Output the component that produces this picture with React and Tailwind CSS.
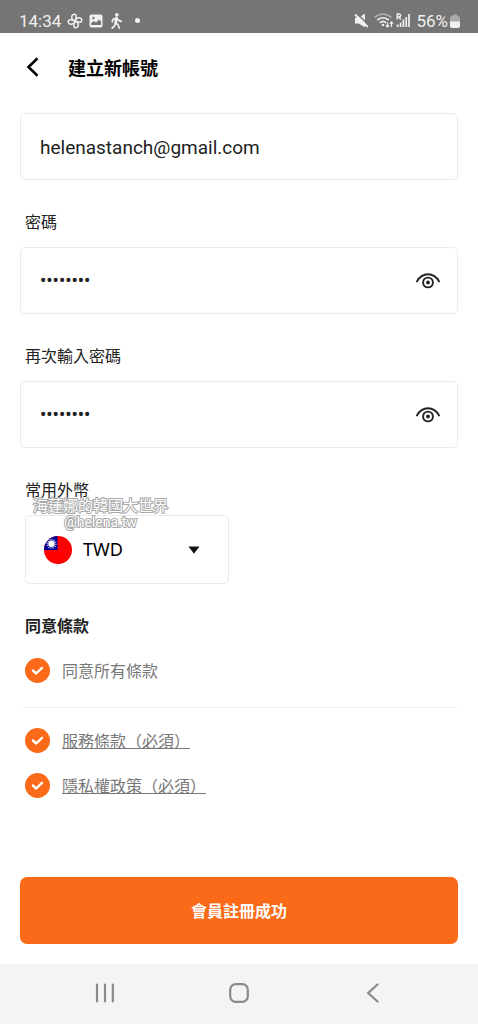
import { useState } from 'react'

const TERMS = [
  { id: 'service', label: '服務條款（必須）' },
  { id: 'privacy', label: '隱私權政策（必須）' },
]

function StatusBar() {
  return (
    <div className="flex h-[33px] shrink-0 items-center justify-between bg-[#757575] pt-2 pr-[18px] pl-[19px] text-[17px] leading-6 text-[#f1f1f1]">
      <div className="flex items-center">
        <span>14:34</span>
        {/* Fan */}
        <svg className="ml-[6px] size-[16px]" viewBox="0 0 16 16" fill="none" stroke="currentColor" strokeWidth="1.5" strokeLinejoin="round">
          <path d="M8 8C5.600 7.600 4.600 5.800 4.800 3.600 5 1.800 6.600 1 8.200 1.400 9.800 1.800 9.400 4.600 8 8Z" />
          <path d="M8 8c.4-2.400 2.200-3.400 4.400-3.200 1.800.2 2.600 1.800 2.200 3.400C14.200 9.800 11.400 9.400 8 8Z" />
          <path d="M8 8c2.400.4 3.400 2.200 3.200 4.400-.2 1.800-1.800 2.600-3.400 2.200C6.200 14.200 6.600 11.400 8 8Z" />
          <path d="M8 8c-.4 2.400-2.200 3.400-4.400 3.200C1.800 11 1 9.400 1.400 7.800 1.800 6.200 4.600 6.600 8 8Z" />
        </svg>
        {/* Picture */}
        <svg className="ml-[6px] size-[14px]" viewBox="0 0 14 14">
          <rect x="0.500" y="0.500" width="13" height="13" rx="2" fill="currentColor" />
          <path d="M2.200 11V9L5 7l2 1.800 3-3.300 2 2V11Z" fill="#757575" />
          <circle cx="4.500" cy="4" r="1.200" fill="#757575" />
        </svg>
        {/* Walking person */}
        <svg className="ml-[7px] h-[16px] w-[13px]" viewBox="0 0 13 16" fill="none" stroke="currentColor" strokeWidth="1.700" strokeLinecap="round" strokeLinejoin="round">
          <circle cx="6.800" cy="1.900" r="1.800" fill="currentColor" stroke="none" />
          <path d="M6.300 5.400 5.700 9.800" strokeWidth="2.800" />
          <path d="M6 4.900 2.900 6.400 2.200 8.800M7 5.200l1.700 2.200 2.500 1M5.400 10.200 4.500 12.800l-2.300 2.400M6 10l2.200 2.200 1.200 3" />
        </svg>
        <span className="ml-[12px] size-[5px] rounded-full bg-current" />
      </div>
      <div className="flex items-center">
        {/* Muted speaker */}
        <svg className="size-[15px]" viewBox="0 0 15 15">
          <path d="M1 4.500h3.500L11 .8v13.400L4.500 10.500H1Z" fill="currentColor" />
          <path d="M2.800.4 15 12.400" stroke="#757575" strokeWidth="1.500" />
          <path d="M1.200 1.500 13.800 14" stroke="currentColor" strokeWidth="1.900" />
        </svg>
        {/* Wi-Fi */}
        <svg className="ml-[5px] h-[15px] w-[20px]" viewBox="0 0 20 15" fill="none" stroke="currentColor" strokeWidth="1.700">
          <path d="M.7 4.600C5.500-.1 12.500-.1 17.300 4.600" opacity="0.450" />
          <path d="M3.200 7.200c3.500-3.200 8-3.200 11.600 0M5.800 9.800c2-1.800 4.400-1.800 6.400 0" />
          <circle cx="9" cy="12" r="1.300" fill="currentColor" stroke="none" />
          <path d="M13.500 9.500v4.500M11.800 12.300l1.700 1.700 1.700-1.700M17.500 14V9M15.900 10.700l1.600-1.700 1.600 1.700" strokeWidth="1.200" />
        </svg>
        {/* Roaming signal */}
        <svg className="ml-[2px] h-[15px] w-[14px]" viewBox="0 0 14 15" fill="none" stroke="currentColor">
          <path d="M1.200 6.500V1h1.900a1.500 1.500 0 0 1 0 3H1.200M3 4l1.700 2.500" strokeWidth="1.400" />
          <path d="M1.700 11.500V14M4.600 9.500V14M7.400 6.500V14M10.200 4V14M13 1V14" strokeWidth="1.700" />
        </svg>
        <span className="ml-[6px]">56%</span>
        {/* Battery */}
        <svg className="ml-[2px] h-[14px] w-[10px]" viewBox="0 0 10 14">
          <path d="M0 4a2 2 0 0 1 2-2L3.500.5h3L8 2a2 2 0 0 1 2 2v4H0Z" fill="#a9a9a9" />
          <path d="M0 7.500h10V12a2 2 0 0 1-2 2H2a2 2 0 0 1-2-2Z" fill="currentColor" />
        </svg>
      </div>
    </div>
  )
}

function EyeIcon() {
  return (
    <svg className="size-6" viewBox="0 0 24 24" fill="none" stroke="currentColor" strokeWidth="1.900" strokeLinecap="round">
      <path d="M1 12.400C6.200 2.900 17.800 2.900 23 12.400" />
      <circle cx="12" cy="13.500" r="4.900" />
      <circle cx="12" cy="13.500" r="1.900" fill="currentColor" stroke="none" />
    </svg>
  )
}

function PasswordField({ id, label }) {
  const [visible, setVisible] = useState(false)

  return (
    <div>
      <label htmlFor={id} className="block pt-[31px] pb-3 pl-[5px] leading-6">{label}</label>
      <div className="flex h-[67px] items-center rounded-[5px] border border-[#ebebeb] pr-[17px] pl-[19px]">
        <input
          id={id}
          type={visible ? 'text' : 'password'}
          defaultValue="••••••••"
          className="min-w-0 flex-1 bg-transparent text-[18px] leading-6 font-medium outline-none"
        />
        <button type="button" aria-label={label} onClick={() => setVisible(!visible)}>
          <EyeIcon />
        </button>
      </div>
    </div>
  )
}

function RoundCheck({ id, checked, onChange }) {
  return (
    <span className="grid shrink-0 place-items-center">
      <input
        id={id}
        type="checkbox"
        checked={checked}
        onChange={onChange}
        className="col-start-1 row-start-1 size-[25px] appearance-none rounded-full bg-gray-300 checked:bg-[#fb6a18]"
      />
      <svg className="pointer-events-none col-start-1 row-start-1 size-[25px]" viewBox="0 0 25 25" fill="none" stroke="white" strokeWidth="2.400" strokeLinecap="round" strokeLinejoin="round">
        <path d="M8 12.500 11.200 15.500 17 9.800" />
      </svg>
    </span>
  )
}

function FlagTW() {
  return (
    <svg className="size-7 shrink-0" viewBox="0 0 28 28">
      <clipPath id="flag-round"><circle cx="14" cy="14" r="14" /></clipPath>
      <g clipPath="url(#flag-round)">
        <rect width="28" height="28" fill="#fe0000" />
        <rect width="13.500" height="14" fill="#000095" />
        <circle cx="7.500" cy="7.800" r="4.300" fill="none" stroke="#fff" strokeWidth="1.800" strokeDasharray="1.100 1.100" opacity="0.700" />
        <circle cx="7.500" cy="7.800" r="3.200" fill="#fff" />
      </g>
    </svg>
  )
}

export default function App() {
  const [agreed, setAgreed] = useState({ service: true, privacy: true })
  const all = agreed.service && agreed.privacy

  return (
    <div className="flex min-h-screen flex-col bg-white font-[Roboto,'Noto_Sans_CJK_TC',sans-serif] text-base text-[#222]">
      <StatusBar />

      <header className="flex h-[68px] shrink-0 items-center pl-[26px] text-black">
        <button type="button" aria-label="返回">
          <svg className="h-5 w-[14px]" viewBox="0 0 14 20" fill="none" stroke="currentColor" strokeWidth="2.600">
            <path d="M11.500 1.200 2.500 10l9 8.800" />
          </svg>
        </button>
        <h1 className="ml-[28px] pt-[3px] text-[18px] leading-6 font-bold">建立新帳號</h1>
      </header>

      <form className="flex flex-1 flex-col px-5 pt-3 pb-5" onSubmit={e => e.preventDefault()}>
        <input
          type="email"
          aria-label="Email"
          defaultValue="helenastanch@gmail.com"
          className="h-[67px] w-full rounded-[5px] border border-[#ebebeb] px-[19px] pt-[2px] text-[19px] outline-none"
        />
        <PasswordField id="password" label="密碼" />
        <PasswordField id="password-again" label="再次輸入密碼" />

        {/* Currency */}
        <div className="relative pl-[5px]">
          <label htmlFor="currency" className="block pt-[31px] pb-3 leading-6">常用外幣</label>
          <div className="flex h-[69px] w-[204px] items-center rounded-[5px] border border-[#ebebeb] pr-[28px] pl-[18px]">
            <FlagTW />
            <select id="currency" className="ml-[11px] min-w-0 flex-1 appearance-none bg-transparent font-['Noto_Sans',sans-serif] text-[18px] text-black outline-none">
              <option>TWD</option>
            </select>
            <svg className="pointer-events-none h-2 w-3" viewBox="0 0 12 8"><path d="M.5.500h11L6 7.800Z" fill="#111" /></svg>
          </div>
          <p className="pointer-events-none absolute top-[50px] left-[13px] text-center text-[15px] leading-4 text-white [-webkit-text-stroke:2px_#a8a8a8] [paint-order:stroke_fill]">
            海蓮娜的韓國大世界<br />
            <span className="text-[14px]">@helena.tw</span>
          </p>
        </div>

        {/* Terms */}
        <h2 className="pt-[31px] pl-[5px] leading-6 font-bold">同意條款</h2>
        <div className="mt-[17px] flex items-center gap-3 border-b border-[#f3f3f3] pb-[23px] pl-[5px] text-[#777]">
          <RoundCheck
            id="agree-all"
            checked={all}
            onChange={() => setAgreed({ service: !all, privacy: !all })}
          />
          <label htmlFor="agree-all" className="pt-1 leading-6">同意所有條款</label>
        </div>
        <div className="mt-[18px] space-y-[17px] pl-[5px] text-[#777]">
          {TERMS.map(t => (
            <div key={t.id} className="flex items-center gap-3">
              <RoundCheck
                id={t.id}
                checked={agreed[t.id]}
                onChange={() => setAgreed({ ...agreed, [t.id]: !agreed[t.id] })}
              />
              <label htmlFor={t.id} className="pt-1 leading-6"><a href="#" className="underline">{t.label}</a></label>
            </div>
          ))}
        </div>

        <button type="submit" className="mt-auto h-[67px] w-full shrink-0 rounded-[7px] bg-[#fb6a18] pt-[2px] font-bold text-white">
          會員註冊成功
        </button>
      </form>

      {/* System navigation */}
      <nav className="grid h-[60px] shrink-0 grid-cols-3 place-items-center bg-[#f4f4f4] px-[38px] pb-[2px] text-[#8a8a8a]">
        <button type="button" aria-label="Recents">
          <svg className="size-5" viewBox="0 0 20 20" stroke="currentColor" strokeWidth="2.200" strokeLinecap="round">
            <path d="M2 1.500v17M10 1.500v17M17.800 1.500v17" />
          </svg>
        </button>
        <button type="button" aria-label="Home">
          <svg className="size-5" viewBox="0 0 20 20" fill="none" stroke="currentColor" strokeWidth="2.200">
            <rect x="1.200" y="1.200" width="17.600" height="17.600" rx="5.500" />
          </svg>
        </button>
        <button type="button" aria-label="Back">
          <svg className="size-5" viewBox="0 0 20 20" fill="none" stroke="currentColor" strokeWidth="2.200" strokeLinecap="round">
            <path d="M14.500 1.500 5.200 10l9.300 8.500" />
          </svg>
        </button>
      </nav>
    </div>
  )
}
